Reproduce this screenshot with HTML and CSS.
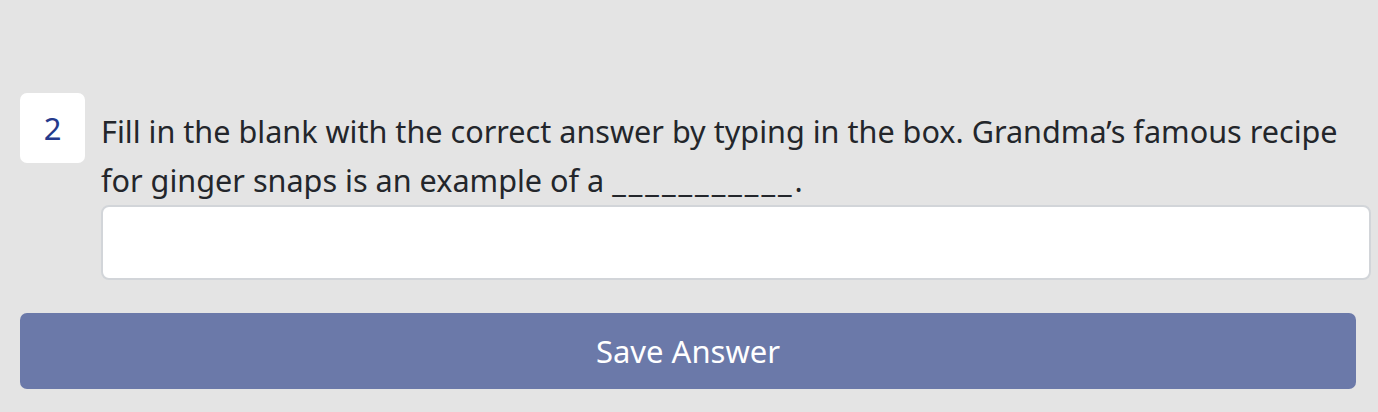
FILE: index.html
```html
<!DOCTYPE html>
<html>
<head>
<meta charset="utf-8">
<link rel="stylesheet" href="styles.css">
</head>
<body>
<div class="page">
  <div class="question">
    <div class="num">2</div>
    <div class="body">
      <p class="prompt">Fill in the blank with the correct answer by typing in the box. Grandma’s famous recipe for ginger snaps is an example of a <span class="blank">___________.</span></p>
      <input class="answer" type="text">
    </div>
  </div>
  <button class="save">Save Answer</button>
</div>
</body>
</html>
```
FILE: styles.css
```css
html, body {
  margin: 0;
  padding: 0;
  background: #e4e4e4;
}
body {
  font-family: "Noto Sans", "Open Sans", sans-serif;
  color: #23262b;
}
.page {
  padding: 93px 7px 0 20px;
}
.question {
  display: flex;
  gap: 16px;
  align-items: flex-start;
}
.num {
  flex: none;
  width: 65px;
  height: 70px;
  background: #fff;
  border-radius: 7px;
  display: flex;
  align-items: center;
  justify-content: center;
  color: #253a8c;
  font-size: 31px;
}
.body {
  flex: 1;
  padding-top: 14px;
}
.prompt {
  margin: 0;
  font-size: 30.6px;
  line-height: 49px;
}
.blank {
  display: inline-block;
  letter-spacing: 3px;
}
.answer {
  display: block;
  box-sizing: border-box;
  width: 100%;
  height: 75px;
  margin-top: 0;
  background: #fff;
  border: 2px solid #d2d5d9;
  border-radius: 8px;
  font: inherit;
  outline: none;
}
.save {
  display: block;
  box-sizing: border-box;
  width: calc(100% - 15px);
  height: 76px;
  margin-top: 33px;
  border: none;
  border-radius: 7px;
  background: #6b79a9;
  color: #fff;
  font-family: "Noto Sans", "Open Sans", sans-serif;
  font-size: 31px;
  cursor: pointer;
}
```
